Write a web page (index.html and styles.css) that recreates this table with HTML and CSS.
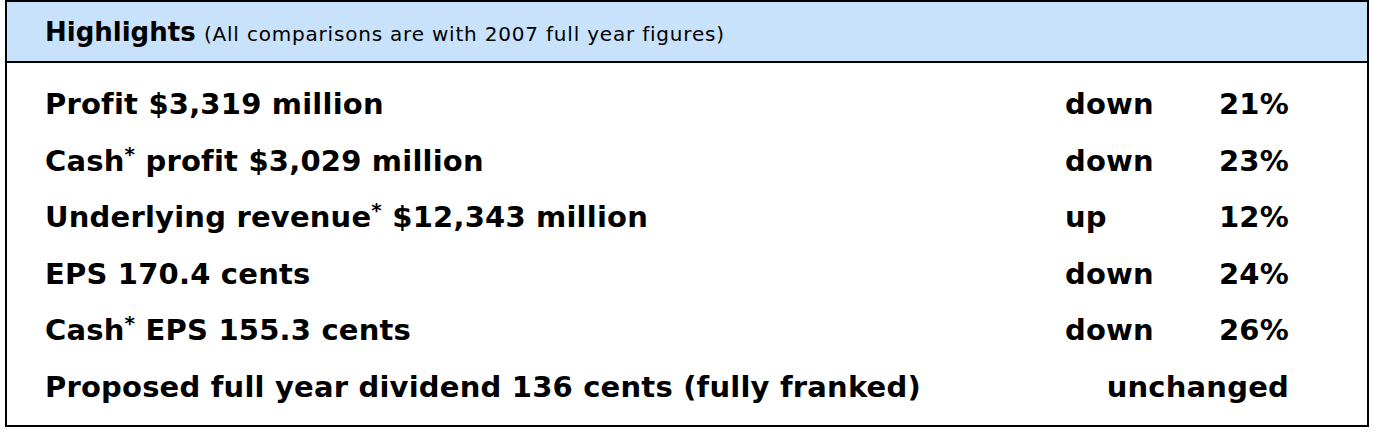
FILE: index.html
```html
<!DOCTYPE html>
<html lang="en">
<head>
  <meta charset="UTF-8">
  <title>Highlights</title>
  <link rel="stylesheet" href="styles.css">
</head>
<body>
  <div class="highlights">
    <div class="highlights-head">
      <strong>Highlights</strong> <span class="note">(All comparisons are with 2007 full year figures)</span>
    </div>
    <div class="highlights-body">
      <div class="item">Profit $3,319 million</div>
      <div class="dir">down</div>
      <div class="pct">21%</div>

      <div class="item">Cash<sup>*</sup> profit $3,029 million</div>
      <div class="dir">down</div>
      <div class="pct">23%</div>

      <div class="item">Underlying revenue<sup>*</sup> $12,343 million</div>
      <div class="dir">up</div>
      <div class="pct">12%</div>

      <div class="item">EPS 170.4 cents</div>
      <div class="dir">down</div>
      <div class="pct">24%</div>

      <div class="item">Cash<sup>*</sup> EPS 155.3 cents</div>
      <div class="dir">down</div>
      <div class="pct">26%</div>

      <div class="item">Proposed full year dividend 136 cents (fully franked)</div>
      <div class="span">unchanged</div>
    </div>
  </div>
</body>
</html>
```

FILE: styles.css
```css
body {
  margin: 0 5px;
  font-family: "DejaVu Sans", Verdana, sans-serif;
  color: #000;
  background: #fff;
}
.highlights {
  border: 2px solid #000;
}
.highlights-head {
  background-color: #c9e2fb;
  border-bottom: 2px solid #000;
  height: 59px;
  line-height: 61px;
  padding-left: 38px;
  font-size: 26px;
}
.highlights-head .note {
  font-size: 20px;
  letter-spacing: 0.8px;
}
.highlights-body {
  display: grid;
  grid-template-columns: 1fr 120px 104px;
  padding: 13px 78px 9px 38px;
  font-size: 29px;
  font-weight: bold;
  line-height: 56.6px;
  letter-spacing: 0.2px;
}
.highlights-body sup {
  font-size: 20px;
  line-height: 0;
  vertical-align: 10px;
}
.pct, .span {
  text-align: right;
}
.span {
  grid-column: 2 / 4;
}
```
